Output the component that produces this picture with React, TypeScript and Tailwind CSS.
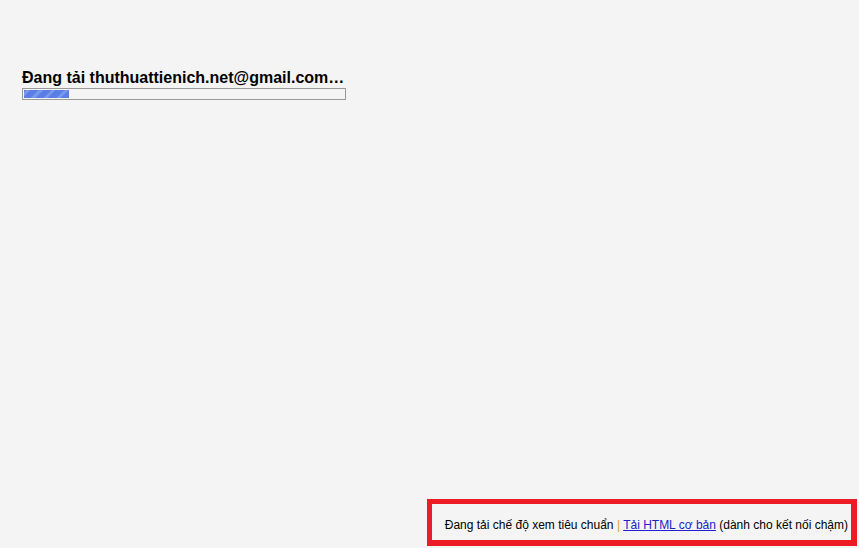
import React from "react";

export default function App() {
  return (
    <div className="w-[859px] h-[548px] bg-[#f4f4f4] flex flex-col justify-between overflow-hidden" style={{ fontFamily: '"Liberation Sans", Arial, sans-serif' }}>
      <div className="pt-[68px] pl-[22px]">
        <div className="text-[16px] font-bold text-black leading-[20px] whitespace-nowrap">Đang tải thuthuattienich.net@gmail.com…</div>
        <div className="w-[324px] h-[12px] border border-[#999999] bg-[#f4f4f4] p-px">
          <div className="w-[45px] h-full bg-[repeating-linear-gradient(-45deg,#5a7de6_0px,#5a7de6_6px,#7898ee_6px,#7898ee_9px)]" />
        </div>
      </div>
      <div className="flex justify-end pr-[2px] pb-[2px]">
        <div className="w-[430px] h-[47px] border-[5px] border-r-[6px] border-b-[6px] border-[#ed1c24] flex items-end justify-end pr-[3px] pb-[8px]">
          <span className="text-[12px] text-black leading-[14px] whitespace-nowrap">
            Đang tải chế độ xem tiêu chuẩn <span className="text-[#e0a030]">|</span>{" "}
            <a href="#" className="text-[#2020d0] underline">Tải HTML cơ bản</a> (dành cho kết nối chậm)
          </span>
        </div>
      </div>
    </div>
  );
}
